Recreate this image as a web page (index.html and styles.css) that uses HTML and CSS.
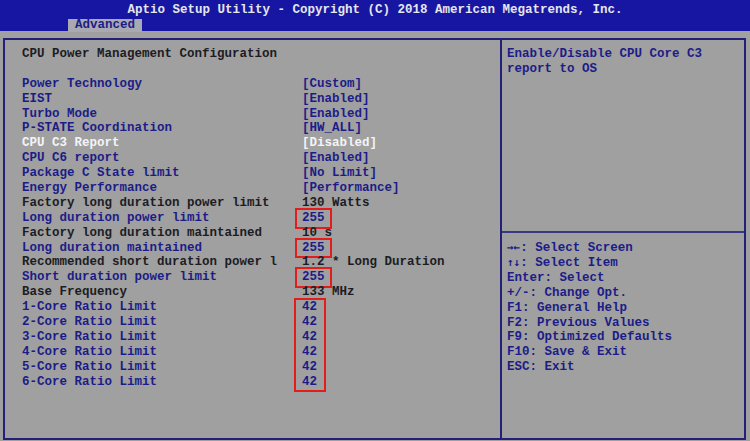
FILE: index.html
```html
<!DOCTYPE html>
<html>
<head>
	<meta charset='utf-8'/>
	<title>Aptio Setup Utility</title>
	<link rel="stylesheet" href="styles.css">
</head>
<body>

	<header>
		<div class="title">Aptio Setup Utility - Copyright (C) 2018 American Megatrends, Inc.</div>
		<div class="tabs"><span class="tab">Advanced</span></div>
	</header>

	<div class="frame">
		<div class="left">
			<div class="row plain">CPU Power Management Configuration</div>
			<div class="row">&nbsp;</div>
			<div class="row"><span class="lbl">Power Technology</span><span>[Custom]</span></div>
			<div class="row"><span class="lbl">EIST</span><span>[Enabled]</span></div>
			<div class="row"><span class="lbl">Turbo Mode</span><span>[Enabled]</span></div>
			<div class="row"><span class="lbl">P-STATE Coordination</span><span>[HW_ALL]</span></div>
			<div class="row sel"><span class="lbl">CPU C3 Report</span><span>[Disabled]</span></div>
			<div class="row"><span class="lbl">CPU C6 report</span><span>[Enabled]</span></div>
			<div class="row"><span class="lbl">Package C State limit</span><span>[No Limit]</span></div>
			<div class="row"><span class="lbl">Energy Performance</span><span>[Performance]</span></div>
			<div class="row plain"><span class="lbl">Factory long duration power limit</span><span>130 Watts</span></div>
			<div class="row"><span class="lbl">Long duration power limit</span><span class="mark">255</span></div>
			<div class="row plain"><span class="lbl">Factory long duration maintained</span><span>10 s</span></div>
			<div class="row"><span class="lbl">Long duration maintained</span><span class="mark">255</span></div>
			<div class="row plain"><span class="lbl">Recommended short duration power l</span><span>1.2 * Long Duration</span></div>
			<div class="row"><span class="lbl">Short duration power limit</span><span class="mark">255</span></div>
			<div class="row plain"><span class="lbl">Base Frequency</span><span>133 MHz</span></div>
			<div class="cores">
				<div class="lbl">
					<div>1-Core Ratio Limit</div>
					<div>2-Core Ratio Limit</div>
					<div>3-Core Ratio Limit</div>
					<div>4-Core Ratio Limit</div>
					<div>5-Core Ratio Limit</div>
					<div>6-Core Ratio Limit</div>
				</div>
				<div class="vals">
					<div>42</div>
					<div>42</div>
					<div>42</div>
					<div>42</div>
					<div>42</div>
					<div>42</div>
				</div>
			</div>
		</div>

		<div class="right">
			<div class="desc">
				<div>Enable/Disable CPU Core C3</div>
				<div>report to OS</div>
			</div>
			<div class="help">
				<div><span class="arr">&rarr;&larr;</span>: Select Screen</div>
				<div><span class="arr">&uarr;&darr;</span>: Select Item</div>
				<div>Enter: Select</div>
				<div>+/-: Change Opt.</div>
				<div>F1: General Help</div>
				<div>F2: Previous Values</div>
				<div>F9: Optimized Defaults</div>
				<div>F10: Save &amp; Exit</div>
				<div>ESC: Exit</div>
			</div>
		</div>
	</div>

</body>
</html>
```

FILE: styles.css
```css
*{
	margin:0;padding:0;
	box-sizing:border-box;
}
body{
	width:750px;
	height:441px;
	overflow:hidden;
	background:#a0a0a0;
	font-family:"Liberation Mono","DejaVu Sans Mono",monospace;
	font-weight:bold;
	font-size:12.5px;
	line-height:14.9px;
	color:#1c1c88;
	white-space:nowrap;
}

header{
	height:31px;
	background:#1616a2;
}
header .title{
	text-align:center;
	color:#e6e6ec;
	line-height:16px;
	padding-top:2px;
}
header .tabs{
	padding-left:68px;
}
header .tab{
	display:inline-block;
	height:13px;
	line-height:13px;
	padding:0 7px;
	background:#a9a9b2;
	color:#1c1c88;
}

.frame{
	display:flex;
	height:402px;
	margin:7px 4px 0 3px;
	border:2px solid #24207a;
}

.left{
	width:495px;
	padding:7px 0 0 17px;
}
.row{
	display:flex;
	height:14.9px;
}
.row .lbl,.cores .lbl{
	width:280px;
}
.row.plain{
	color:#1c1c24;
}
.row.sel{
	color:#f4f4f8;
}
.mark{
	padding:0 4px;
	margin:0 -4px;
	outline:2px solid #e41c1c;
	outline-offset:1px;
}

.cores{
	display:flex;
}
.cores .vals{
	border:2px solid #e41c1c;
	margin:-2px 0 -2px -8px;
	padding:0 7px 0 6px;
}

.right{
	flex:1;
	display:flex;
	flex-direction:column;
	border-left:2px solid #24207a;
}
.desc{
	height:193px;
	padding:7px 0 0 5px;
	border-bottom:2px solid #3a3a84;
}
.help{
	padding:8px 0 0 5px;
}
.arr{
	font-family:"DejaVu Sans Mono",monospace;
	font-size:11px;
}
```
